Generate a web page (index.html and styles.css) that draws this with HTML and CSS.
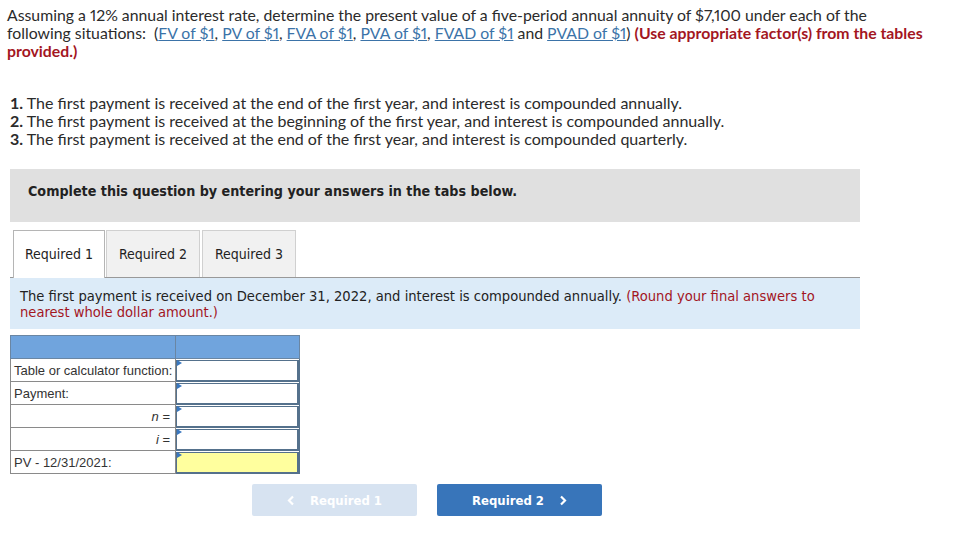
FILE: index.html
```html
<!DOCTYPE html>
<html lang="en">
<head>
    <meta charset="UTF-8">
    <title>Present value of an annuity</title>
    <link rel="stylesheet" href="styles.css">
</head>
<body>
    <div class="question">
        <p class="intro">
            Assuming a 12% annual interest rate, determine the present value of a five-period annual annuity of $7,100 under each of the<br>
            following situations: &nbsp;(<a href="#">FV of $1</a>, <a href="#">PV of $1</a>, <a href="#">FVA of $1</a>, <a href="#">PVA of $1</a>, <a href="#">FVAD of $1</a> and <a href="#">PVAD of $1</a>) <b class="warn">(Use appropriate factor(s) from the tables provided.)</b>
        </p>

        <ol class="cases">
            <li><b>1.</b> The first payment is received at the end of the first year, and interest is compounded annually.</li>
            <li><b>2.</b> The first payment is received at the beginning of the first year, and interest is compounded annually.</li>
            <li><b>3.</b> The first payment is received at the end of the first year, and interest is compounded quarterly.</li>
        </ol>
    </div>

    <div class="banner">Complete this question by entering your answers in the tabs below.</div>

    <div class="tabs">
        <div class="tab active">Required 1</div>
        <div class="tab">Required 2</div>
        <div class="tab">Required 3</div>
    </div>

    <div class="prompt">
        The first payment is received on December 31, 2022, and interest is compounded annually. <span class="warn">(Round your final answers to nearest whole dollar amount.)</span>
    </div>

    <table class="answers">
        <colgroup><col class="label-col"><col class="input-col"></colgroup>
        <tr class="head"><td></td><td></td></tr>
        <tr><td>Table or calculator function:</td><td class="input"><div class="box"></div></td></tr>
        <tr><td>Payment:</td><td class="input"><div class="box"></div></td></tr>
        <tr><td class="right"><i>n</i> =</td><td class="input"><div class="box"></div></td></tr>
        <tr><td class="right"><i>i</i> =</td><td class="input"><div class="box"></div></td></tr>
        <tr><td>PV - 12/31/2021:</td><td class="input"><div class="box yellow"></div></td></tr>
    </table>

    <div class="nav">
        <button class="nav-btn disabled">
            <svg width="8" height="11" viewBox="0 0 8 11"><polyline points="6,1.5 2,5.5 6,9.5" fill="none" stroke="#fff" stroke-width="2.2"/></svg>
            Required 1
        </button>
        <button class="nav-btn next">
            Required 2
            <svg width="8" height="11" viewBox="0 0 8 11"><polyline points="2,1.5 6,5.5 2,9.5" fill="none" stroke="#fff" stroke-width="2.2"/></svg>
        </button>
    </div>
</body>
</html>
```

FILE: styles.css
```css
body {
    margin: 0;
    padding: 0 10px;
    background: #fff;
    color: #333;
}

.question {
    font-family: Lato, "Liberation Sans", sans-serif;
    font-size: 16px;
    color: #2b2b2b;
}

.intro {
    width: 945px;
    margin: 0 0 0 -3px;
    padding-top: 6px;
    font-size: 15.8px;
    line-height: 18px;
    font-variant-numeric: proportional-nums;
}

.intro a {
    color: #3b73a8;
    text-decoration: underline;
}

.warn {
    color: #a3161f;
}

.cases {
    list-style: none;
    margin: 34px 0 0;
    padding: 0;
    line-height: 18px;
}

.banner {
    margin-top: 21px;
    width: 850px;
    height: 53px;
    box-sizing: border-box;
    padding: 14px 0 0 18px;
    background: #e0e0e0;
    font-family: "DejaVu Sans Condensed", Tahoma, sans-serif;
    font-weight: bold;
    font-size: 14.2px;
    color: #222;
}

.tabs {
    display: flex;
    margin-top: 8px;
    padding-left: 3px;
    width: 847px;
    border-bottom: 1px solid #999;
    font-family: "DejaVu Sans Condensed", Tahoma, sans-serif;
    font-size: 14px;
}

.tab {
    width: 94px;
    height: 47px;
    box-sizing: border-box;
    margin-right: 2px;
    background: #f1f1f1;
    border: 1px solid #d0d0d0;
    border-bottom: none;
    text-align: center;
    line-height: 46px;
    color: #222;
}

.tab.active {
    width: 92px;
    margin-right: 1px;
    background: #fff;
    border-color: #b5b5b5;
    height: 48px;
    margin-bottom: -1px;
}

.prompt {
    width: 850px;
    height: 51px;
    box-sizing: border-box;
    padding: 10px 10px 0;
    background: #dcebf8;
    font-family: "DejaVu Sans Condensed", Tahoma, sans-serif;
    font-size: 14.6px;
    line-height: 16px;
    color: #222;
}

.answers {
    margin-top: 6px;
    border-collapse: collapse;
    table-layout: fixed;
    font-family: "Liberation Sans", Arial, sans-serif;
    font-size: 13px;
    color: #333;
}

.label-col {
    width: 165px;
}

.input-col {
    width: 124px;
}

.answers td {
    height: 23px;
    box-sizing: border-box;
    padding: 0 0 0 3px;
    border: 1px solid #8a8a8a;
    white-space: nowrap;
}

.answers td.right {
    text-align: right;
    padding-right: 5px;
}

.answers tr.head td {
    background: #70a4dd;
    border-color: #6a86a3;
}

.answers td.input {
    padding: 0;
    position: relative;
    border-color: #55718c;
}

.box {
    height: 21px;
    box-sizing: border-box;
    border: 1px solid #55718c;
    border-right-width: 2px;
    background: #fff;
}

.box.yellow {
    background: #ffff9e;
}

.input::before {
    content: "";
    position: absolute;
    left: 1px;
    top: 1px;
    border-left: 5px solid #3a78c0;
    border-top: 3px solid transparent;
    border-bottom: 3px solid transparent;
}

.nav {
    display: flex;
    gap: 20px;
    margin: 10px 0 0 242px;
}

.nav-btn {
    display: flex;
    align-items: center;
    justify-content: center;
    gap: 15px;
    width: 165px;
    height: 32px;
    border: none;
    border-radius: 2px;
    font-family: "DejaVu Sans Condensed", Tahoma, sans-serif;
    font-weight: bold;
    font-size: 13px;
    color: #fff;
}

.nav-btn.disabled {
    background: #d7e3f1;
}

.nav-btn.next {
    background: #3875ba;
}
```
